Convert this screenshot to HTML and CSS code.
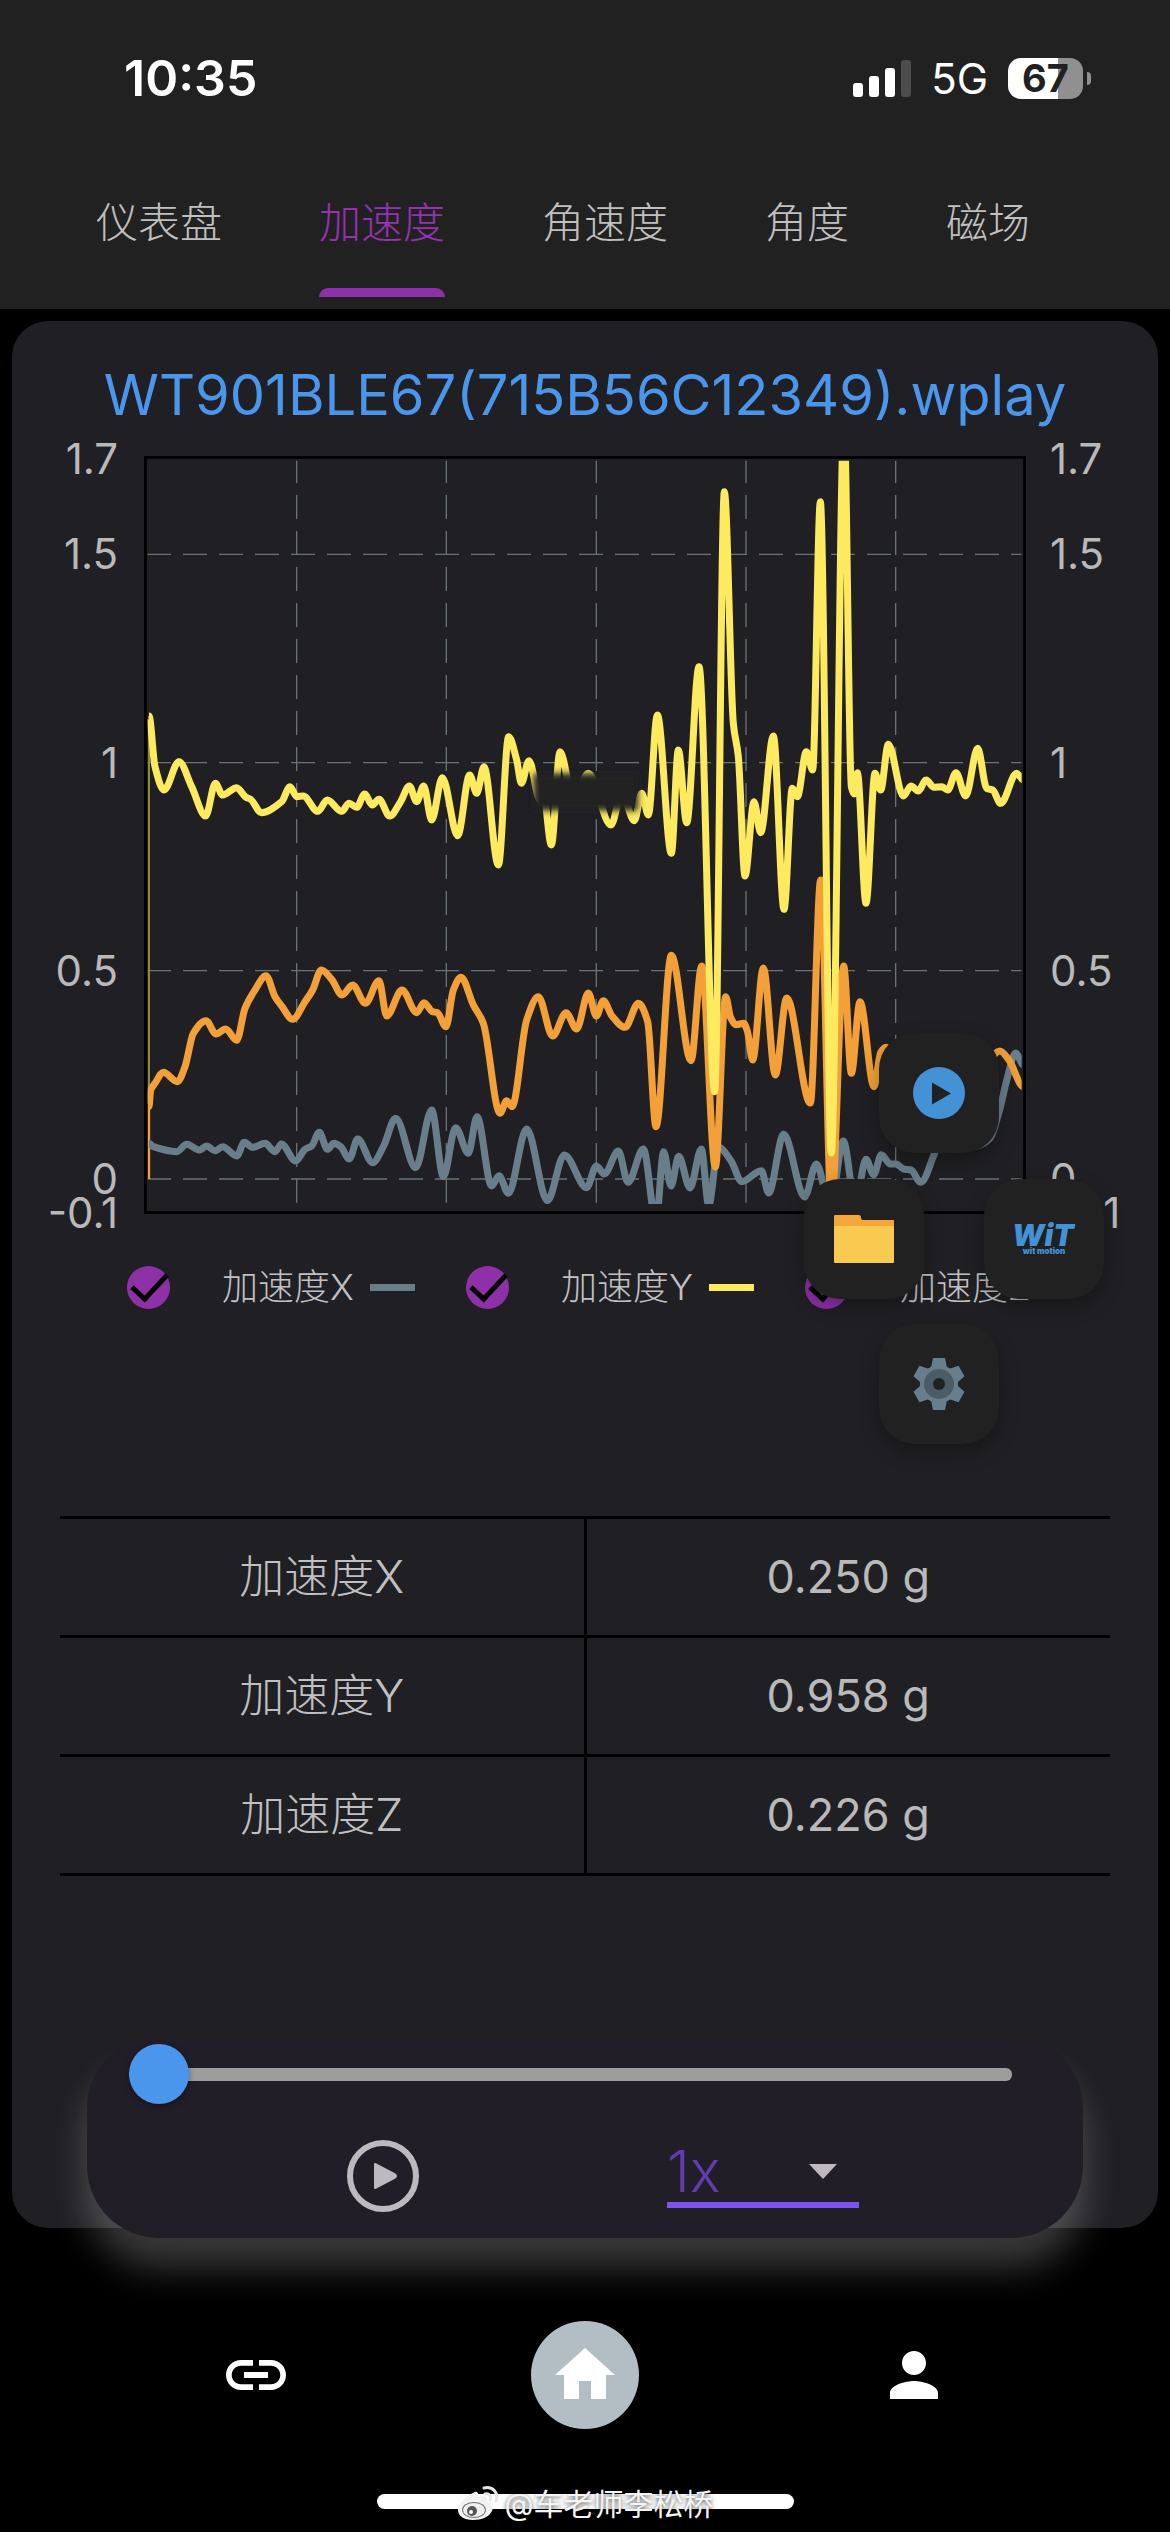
FILE: index.html
```html
<!DOCTYPE html>
<html lang="zh-CN">
<head>
    <meta charset="UTF-8">
    <meta name="viewport" content="width=device-width, initial-scale=1.0">
    <title>加速度</title>
    <link rel="stylesheet" href="styles.css">
</head>
<body>
    <header class="header">
        <div class="status">
            <span class="time">10:35</span>
            <div class="status-right">
                <svg class="signal" viewBox="0 0 58 37">
                    <rect x="0" y="23" width="10" height="14" rx="3"/>
                    <rect x="16" y="16" width="10" height="21" rx="3"/>
                    <rect x="32" y="8" width="10" height="29" rx="3"/>
                    <rect class="off" x="48" y="0" width="10" height="37" rx="3"/>
                </svg>
                <span class="network">5G</span>
                <span class="battery">67</span>
                <span class="battery-tip"></span>
            </div>
        </div>
        <nav class="tabs">
            <a href="#dashboard">仪表盘</a>
            <a href="#acc" class="active">加速度</a>
            <a href="#gyro">角速度</a>
            <a href="#angle">角度</a>
            <a href="#mag">磁场</a>
        </nav>
    </header>

    <main class="card">
        <h1>WT901BLE67(715B56C12349).wplay</h1>
        <div class="chart">
            <ul class="axis axis-left">
                <li>1.7</li><li>1.5</li><li>1</li><li>0.5</li><li>0</li><li>-0.1</li>
            </ul>
            <svg class="plot" viewBox="42 48 2646 2274" preserveAspectRatio="none">
                <defs>
                    <clipPath id="area"><rect x="53" y="62" width="2622" height="2230"/></clipPath>
                    <filter id="soft" x="-20%" y="-40%" width="140%" height="180%"><feGaussianBlur stdDeviation="10"/></filter>
                </defs>
                <rect class="frame" x="46" y="52" width="2638" height="2266"/>
                <g class="grid" clip-path="url(#area)">
                    <path d="M51 343H2675M51 968H2675M51 1592H2675M51 2217H2675"/>
                    <path d="M500 57V2288M949 57V2288M1399 57V2288M1848 57V2288M2297 57V2288"/>
                </g>
                <g class="lines" clip-path="url(#area)">
                    <path class="start-y" d="M57 828V1960"/>
                    <path class="start-z" d="M57 1960V2217"/>
                    <path id="lineX" class="x"/>
                    <path id="lineZ" class="z"/>
                    <path id="lineY" class="y"/>
                    <rect class="fade" x="1210" y="1000" width="314" height="112" filter="url(#soft)"/>
                </g>
            </svg>
            <ul class="axis axis-right">
                <li>1.7</li><li>1.5</li><li>1</li><li>0.5</li><li>0</li><li>-0.1</li>
            </ul>
        </div>

        <div class="legend">
            <label><input type="checkbox" checked><span>加速度X</span><i class="key key-x"></i></label>
            <label><input type="checkbox" checked><span>加速度Y</span><i class="key key-y"></i></label>
            <label><input type="checkbox" checked><span>加速度Z</span><i class="key key-z"></i></label>
        </div>

        <table class="values">
            <tr><th scope="row">加速度X</th><td>0.250 g</td></tr>
            <tr><th scope="row">加速度Y</th><td>0.958 g</td></tr>
            <tr><th scope="row">加速度Z</th><td>0.226 g</td></tr>
        </table>

        <!-- floating menu -->
        <div class="menu">
            <button class="menu-play" aria-label="播放">
                <svg width="52" height="52" viewBox="0 0 52 52">
                    <circle cx="26" cy="26" r="26" fill="#4492d6"/>
                    <path d="M19 15.500L38 26.500L19 37.500Z" fill="#212121"/>
                </svg>
            </button>
            <button class="menu-folder" aria-label="文件">
                <svg width="60" height="48" viewBox="0 0 60 48">
                    <path d="M0 1Q0 0 1 0H25Q27 0 27 3L28 5H60V20H0Z" fill="#f4a63a"/>
                    <rect y="11" width="60" height="37" rx="1" fill="#f8cb50"/>
                </svg>
            </button>
            <button class="menu-wit" aria-label="WIT">
                <svg width="64" height="34" viewBox="0 0 64 34">
                    <text class="wit-big" x="31" y="24" text-anchor="middle">WiT</text>
                    <text class="wit-small" x="32" y="32" text-anchor="middle">wit motion</text>
                </svg>
            </button>
            <button class="menu-gear" aria-label="设置">
                <svg width="52" height="52" viewBox="-26 -26 52 52">
                    <g fill="#677f8c">
                        <circle r="19"/>
                        <path id="tooth" d="M-6 -26H6L8 -16V16L6 26H-6L-8 16V-16Z"/>
                        <use href="#tooth" transform="rotate(60)"/>
                        <use href="#tooth" transform="rotate(120)"/>
                    </g>
                    <circle r="15" fill="#4a5d67"/>
                    <circle r="6" fill="#212121"/>
                </svg>
            </button>
        </div>
    </main>

    <section class="player">
        <input type="range" class="seek" min="0" max="100" value="0" aria-label="进度">
        <div class="controls">
            <button class="play" aria-label="播放">
                <svg width="72" height="72" viewBox="0 0 72 72">
                    <circle cx="36" cy="36" r="33" fill="none" stroke="#bdb9bf" stroke-width="6"/>
                    <path d="M28 24V48L48 37.500Q50 36 48 34.500Z" fill="#bdb9bf" stroke="#bdb9bf" stroke-width="2" stroke-linejoin="round"/>
                </svg>
            </button>
            <div class="speed">
                <select aria-label="速度">
                    <option>1x</option>
                    <option>2x</option>
                    <option>4x</option>
                </select>
                <span class="arrow"></span>
            </div>
        </div>
    </section>

    <nav class="bottom">
        <a href="#link" aria-label="连接">
            <svg width="72" height="72" viewBox="0 0 24 24"><path d="M3.900 12c0-1.710 1.390-3.100 3.100-3.100h4V7H7c-2.760 0-5 2.240-5 5s2.240 5 5 5h4v-1.900H7c-1.710 0-3.100-1.390-3.100-3.100zM8 13h8v-2H8v2zm9-6h-4v1.900h4c1.710 0 3.100 1.390 3.100 3.100s-1.390 3.100-3.100 3.100h-4V17h4c2.760 0 5-2.240 5-5s-2.240-5-5-5z"/></svg>
        </a>
        <a href="#home" class="home" aria-label="首页">
            <svg width="72" height="72" viewBox="0 0 24 24"><path d="M10 20v-6h4v6h5v-8h3L12 3 2 12h3v8z"/></svg>
        </a>
        <a href="#me" aria-label="我的">
            <svg width="72" height="72" viewBox="0 0 24 24"><path d="M12 12c2.210 0 4-1.790 4-4s-1.790-4-4-4-4 1.790-4 4 1.790 4 4 4zm0 2c-2.670 0-8 1.340-8 4v2h16v-2c0-2.660-5.330-4-8-4z"/></svg>
        </a>
    </nav>

    <footer class="footer">
        <div class="home-bar"></div>
        <div class="credit">
            <svg width="42" height="36" viewBox="0 0 42 36">
                <path d="M16 7C20 4 22 7 21 11C27 9 31 10 30 15C35 17 37 20 35 25C32 31 25 34 16 34C7 34 1 30 1 24C1 18 9 10 16 7Z" fill="#f2f2f2"/>
                <ellipse cx="17" cy="24" rx="12" ry="8" fill="#777"/>
                <ellipse cx="17" cy="24" rx="11" ry="7" fill="#eee"/>
                <circle cx="15" cy="25" r="5" fill="#555"/>
                <circle cx="14" cy="26" r="2" fill="#fff"/>
                <path d="M27 2C36 0 42 7 39 15M28 8C32 7 35 10 33 14" fill="none" stroke="#e6e6e6" stroke-width="3" stroke-linecap="round"/>
            </svg>
            <span>@车老师李松桥</span>
        </div>
    </footer>

    <script src="script.js"></script>
</body>
</html>
```
FILE: styles.css
```css
* {
    box-sizing: border-box;
}
body {
    margin: 0;
    min-height: 100vh;
    display: flex;
    flex-direction: column;
    background: #000;
    color: #b9b9bc;
    font-family: Inter, "Noto Sans CJK SC", sans-serif;
}
button {
    border: none;
    padding: 0;
    background: none;
    cursor: pointer;
}
ul {
    list-style: none;
    margin: 0;
    padding: 0;
}

/* header */
.header {
    background: #212121;
    height: 309px;
    display: flex;
    flex-direction: column;
    justify-content: space-between;
    padding-bottom: 12px;
}
.status {
    display: flex;
    justify-content: space-between;
    align-items: center;
    height: 156px;
    padding: 0 79px 0 124px;
    color: #fff;
}
.time {
    font-size: 50px;
    font-weight: 600;
}
.status-right {
    display: flex;
    align-items: center;
}
.signal {
    width: 58px;
    height: 37px;
    fill: #fff;
    margin-right: 20px;
}
.signal .off {
    fill: #4c4c4c;
}
.network {
    font-size: 42px;
    margin-right: 20px;
}
.battery {
    width: 75px;
    height: 41px;
    line-height: 41px;
    border-radius: 13px;
    background: linear-gradient(90deg, #fff 67%, #909090 67%);
    color: #212121;
    font-size: 38px;
    font-weight: 700;
    text-align: center;
}
.battery-tip {
    width: 4px;
    height: 13px;
    margin-left: 4px;
    border-radius: 0 4px 4px 0;
    background: #909090;
}
.tabs {
    display: flex;
    gap: 97px;
    padding-left: 96px;
}
.tabs a {
    display: flex;
    flex-direction: column;
    justify-content: space-between;
    height: 106px;
    line-height: 64px;
    font-size: 42px;
    font-weight: 300;
    color: #c0c0c0;
    text-decoration: none;
}
.tabs .active {
    color: #9632b2;
}
.tabs .active::after {
    content: "";
    height: 9px;
    border-radius: 9px 9px 0 0;
    background: #8e30a8;
}

/* chart card */
.card {
    position: relative;
    margin: 12px 12px 0;
    padding: 36px 0 352px;
    border-radius: 36px;
    background: #202024;
}
h1 {
    margin: 0 0 23px;
    font-size: 56px;
    line-height: 76px;
    font-weight: 400;
    text-align: center;
    color: #4a96ec;
}
.chart {
    display: flex;
    height: 758px;
}
.axis {
    width: 132px;
    margin-top: -14px;
    display: grid;
    grid-template-rows: 95px 209px 208px 208px 34px 34px;
    font-size: 42px;
    line-height: 34px;
}
.axis-left {
    text-align: right;
    padding-right: 26px;
}
.axis-right {
    padding-left: 24px;
}
.plot {
    flex: 1;
    min-width: 0;
    height: 758px;
}
.frame {
    fill: none;
    stroke: #000;
    stroke-width: 9;
}
.grid path {
    fill: none;
    stroke: #68727a;
    stroke-width: 4;
    stroke-dasharray: 72 36;
}
.lines path {
    fill: none;
    stroke-width: 21;
    stroke-linejoin: round;
}
.lines .x {
    stroke: #687f8b;
}
.lines .y {
    stroke: #fdea5f;
}
.lines .z {
    stroke: #f2a037;
}
.lines .start-y {
    stroke: #938837;
    stroke-width: 6;
}
.lines .start-z {
    stroke: #f2a037;
    stroke-width: 7;
}
.fade {
    fill: #202022;
}

/* legend */
.legend {
    display: grid;
    grid-template-columns: repeat(3, 339px);
    margin-top: 47px;
    padding-left: 115px;
}
.legend label {
    display: flex;
    align-items: center;
    height: 52px;
    font-size: 36px;
    font-weight: 300;
    line-height: 48px;
    color: #c0c0c3;
}
.legend input {
    appearance: none;
    width: 43px;
    height: 43px;
    margin: 0 52px 0 0;
    border-radius: 50%;
    background: #8e30a8;
    display: grid;
    place-items: center;
}
.legend input:checked::before {
    content: "";
    width: 30px;
    height: 15px;
    margin: -9px 0 0 1px;
    border-left: 5px solid #000;
    border-bottom: 5px solid #000;
    transform: rotate(-47deg);
}
.key {
    width: 45px;
    height: 7px;
    margin-left: 16px;
}
.key-x {
    background: #687f8b;
}
.key-y {
    background: #fdea5f;
}
.key-z {
    background: #f2a037;
}

/* values */
.values {
    width: calc(100% - 96px);
    margin: 203px 48px 0;
    border-collapse: collapse;
    table-layout: fixed;
    font-size: 45px;
    line-height: 60px;
}
.values tr {
    height: 119px;
    border-top: 3px solid #000;
    border-bottom: 3px solid #000;
}
.values th,
.values td {
    padding: 0;
    font-weight: 400;
    text-align: center;
}
.values th {
    border-right: 3px solid #000;
    font-weight: 300;
    color: #c0c0c3;
}

/* floating menu */
.menu {
    position: absolute;
    top: 712px;
    right: 54px;
    width: 300px;
    height: 411px;
}
.menu button {
    position: absolute;
    width: 120px;
    height: 120px;
    border-radius: 36px;
    background: #212121;
    box-shadow: 0 8px 20px rgba(0, 0, 0, 0.3);
    display: flex;
    align-items: center;
    justify-content: center;
}
.menu .menu-play {
    top: 0;
    left: 75px;
}
.menu .menu-folder {
    top: 146px;
    left: 0;
}
.menu .menu-wit {
    top: 146px;
    right: 0;
}
.menu .menu-gear {
    bottom: 0;
    left: 75px;
}
.wit-big {
    font: italic 900 30px Inter, sans-serif;
    fill: #4492d6;
}
.wit-small {
    font: 900 8px Inter, sans-serif;
    fill: #4492d6;
}

/* player */
.player {
    position: relative;
    margin: -192px 87px 0;
    padding: 8px 71px 0 42px;
    height: 202px;
    border-radius: 72px;
    background: #221e28;
    box-shadow: 0 30px 36px rgba(255, 255, 255, 0.22);
}
.seek {
    appearance: none;
    display: block;
    width: 100%;
    height: 60px;
    margin: 0;
    background: none;
}
.seek::-webkit-slider-runnable-track {
    height: 13px;
    border-radius: 6px;
    background: #9d9d9d;
}
.seek::-webkit-slider-thumb {
    appearance: none;
    width: 60px;
    height: 60px;
    margin-top: -24px;
    border-radius: 50%;
    background: #4a96ec;
    box-shadow: 0 2px 6px rgba(0, 0, 0, 0.4);
}
.controls {
    display: flex;
    justify-content: space-between;
    align-items: flex-end;
    margin-top: 36px;
    padding: 0 153px 0 218px;
}
.play,
.play svg {
    display: block;
}
.speed {
    display: grid;
    align-items: center;
    width: 192px;
    height: 68px;
    margin-bottom: 4px;
    border-bottom: 6px solid #7b52f3;
}
.speed select,
.arrow {
    grid-area: 1 / 1;
}
.speed select {
    appearance: none;
    width: 100%;
    height: 62px;
    padding: 0;
    border: none;
    background: none;
    color: #5f3db0;
    font-family: inherit;
    font-size: 58px;
    font-weight: 300;
    line-height: 62px;
}
.arrow {
    justify-self: end;
    margin-right: 22px;
    border: 14px solid transparent;
    border-top: 15px solid #bdb9bf;
    border-bottom: none;
    pointer-events: none;
}

/* bottom navigation */
.bottom {
    display: flex;
    justify-content: space-between;
    align-items: center;
    margin: 83px 202px 0;
    height: 108px;
}
.bottom a {
    width: 108px;
    height: 108px;
    border-radius: 50%;
    display: flex;
    align-items: center;
    justify-content: center;
}
.bottom svg {
    fill: #fff;
}
.bottom .home {
    background: #b3bec4;
}
.footer {
    margin-top: auto;
    height: 56px;
    display: grid;
    justify-items: center;
    align-items: center;
}
.home-bar,
.credit {
    grid-area: 1 / 1;
}
.home-bar {
    width: 417px;
    height: 15px;
    margin-bottom: 6px;
    border-radius: 8px;
    background: #fff;
}
.credit {
    display: flex;
    align-items: center;
    gap: 6px;
    font-size: 30px;
    line-height: 36px;
    color: #f4f4f4;
    text-shadow: 0 1px 4px rgba(0, 0, 0, 0.7);
}
```
FILE: script.js
```js
// turning points of each curve, in the units of the plot's viewBox
const xPoints = [
    [57, 2110], [70, 2120], [140, 2135], [170, 2113], [208, 2130], [230, 2118], [255, 2132], [278, 2120],
    [320, 2148], [343, 2107], [368, 2122], [405, 2110], [435, 2135], [454, 2112], [497, 2163], [525, 2128],
    [545, 2118], [568, 2077], [592, 2128], [612, 2110], [632, 2120], [658, 2157], [683, 2097], [728, 2168],
    [760, 2120], [797, 2035], [857, 2183], [905, 2010], [940, 2210], [977, 2063], [1015, 2140], [1041, 2030],
    [1085, 2238], [1107, 2207], [1135, 2260], [1190, 2067], [1252, 2282], [1303, 2145], [1370, 2243],
    [1399, 2178], [1423, 2202], [1465, 2133], [1494, 2227], [1540, 2127], [1578, 2345], [1601, 2135],
    [1623, 2238], [1646, 2149], [1680, 2244], [1714, 2127], [1736, 2296], [1765, 2122], [1804, 2164],
    [1835, 2225], [1894, 2192], [1916, 2259], [1961, 2083], [2024, 2271], [2059, 2172], [2101, 2300],
    [2140, 2103], [2176, 2290], [2208, 2158], [2231, 2204], [2254, 2144], [2281, 2172], [2298, 2172],
    [2321, 2187], [2343, 2190], [2372, 2227], [2411, 2147], [2460, 2000], [2540, 2118], [2580, 2095],
    [2609, 2009], [2631, 1917], [2657, 1839], [2680, 1875]
];
const yPoints = [
    [57, 828], [75, 980], [102, 1050], [147, 965], [185, 1040], [227, 1128], [256, 1030], [278, 1065],
    [320, 1043], [348, 1072], [362, 1078], [394, 1118], [455, 1085], [480, 1040], [500, 1070], [520, 1068],
    [563, 1114], [592, 1080], [635, 1114], [657, 1090], [680, 1102], [704, 1062], [727, 1095], [747, 1078],
    [779, 1128], [812, 1085], [838, 1038], [860, 1085], [881, 1038], [905, 1140], [937, 1013], [983, 1187],
    [1019, 1005], [1040, 1060], [1062, 980], [1105, 1275], [1136, 890], [1160, 960], [1174, 1030],
    [1197, 962], [1230, 1080], [1240, 1060], [1264, 1215], [1290, 935], [1330, 1080], [1375, 1000],
    [1443, 1155], [1475, 1060], [1513, 1142], [1535, 1060], [1555, 1125], [1582, 825], [1624, 1240],
    [1645, 930], [1670, 1148], [1707, 680], [1754, 1955], [1783, 155], [1810, 850], [1825, 950],
    [1845, 1308], [1872, 1085], [1892, 1178], [1930, 888], [1962, 1408], [1987, 1045], [2002, 1070],
    [2029, 935], [2048, 990], [2071, 185], [2104, 2139], [2142, -60], [2164, 1040], [2173, 1062],
    [2182, 998], [2208, 1390], [2235, 1000], [2252, 1050], [2275, 913], [2320, 1068], [2343, 1038],
    [2365, 1053], [2388, 1020], [2412, 1042], [2435, 1040], [2453, 1050], [2478, 998], [2507, 1068],
    [2543, 925], [2570, 1045], [2588, 1050], [2612, 1090], [2660, 1000], [2680, 1020]
];
const zPoints = [
    [57, 2000], [62, 1950], [75, 1930], [100, 1897], [142, 1925], [165, 1880], [190, 1780], [228, 1742],
    [258, 1782], [287, 1767], [320, 1801], [345, 1705], [375, 1650], [408, 1607], [435, 1670], [455, 1698],
    [488, 1738], [525, 1685], [548, 1650], [574, 1590], [605, 1618], [636, 1665], [668, 1635], [706, 1690],
    [747, 1622], [770, 1728], [816, 1650], [860, 1718], [882, 1688], [907, 1715], [922, 1718], [948, 1760],
    [970, 1650], [993, 1612], [1030, 1695], [1060, 1750], [1110, 2020], [1130, 1982], [1146, 2000],
    [1190, 1740], [1225, 1670], [1268, 1788], [1308, 1718], [1340, 1767], [1375, 1659], [1399, 1728],
    [1420, 1682], [1446, 1728], [1485, 1762], [1525, 1690], [1553, 1745], [1578, 2060], [1624, 1546],
    [1683, 1862], [1715, 1578], [1756, 2181], [1787, 1670], [1802, 1733], [1818, 1754], [1841, 1750],
    [1852, 1773], [1868, 1860], [1900, 1584], [1936, 1905], [1970, 1674], [2041, 1989], [2072, 1320],
    [2104, 2300], [2141, 1578], [2164, 1900], [2190, 1685], [2232, 1940], [2252, 1838], [2268, 1822],
    [2330, 1930], [2560, 1880], [2609, 1833], [2637, 1860], [2680, 1940]
];

// monotone cubic curve, so peaks never overshoot
function curve(points) {
    const slope = (a, b) => (b[1] - a[1]) / (b[0] - a[0]);
    const tangents = points.map((p, i) => {
        if (i === 0 || i === points.length - 1) return 0;
        const s1 = slope(points[i - 1], p);
        const s2 = slope(p, points[i + 1]);
        return s1 * s2 <= 0 ? 0 : 2 * s1 * s2 / (s1 + s2);
    });
    let d = `M${points[0]}`;
    for (let i = 1; i < points.length; i++) {
        const [x0, y0] = points[i - 1];
        const [x1, y1] = points[i];
        const h = (x1 - x0) / 3;
        d += `C${x0 + h} ${y0 + h * tangents[i - 1]} ${x1 - h} ${y1 - h * tangents[i]} ${x1} ${y1}`;
    }
    return d;
}

document.getElementById('lineX').setAttribute('d', curve(xPoints));
document.getElementById('lineY').setAttribute('d', curve(yPoints));
document.getElementById('lineZ').setAttribute('d', curve(zPoints));
```
